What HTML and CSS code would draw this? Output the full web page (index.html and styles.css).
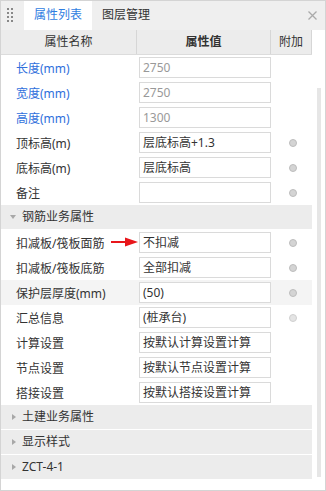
FILE: index.html
```html
<!DOCTYPE html>
<html lang="zh-CN">
<head>
  <meta charset="UTF-8">
  <title>属性列表</title>
  <link rel="stylesheet" href="styles.css">
</head>
<body>
<div class="panel">
  <div class="tabs">
    <svg class="grip" width="8" height="16" viewBox="0 0 8 16">
      <rect x="0" y="0" width="2" height="2"/><rect x="4" y="0" width="2" height="2"/>
      <rect x="0" y="4" width="2" height="2"/><rect x="4" y="4" width="2" height="2"/>
      <rect x="0" y="8" width="2" height="2"/><rect x="4" y="8" width="2" height="2"/>
      <rect x="0" y="12" width="2" height="2"/><rect x="4" y="12" width="2" height="2"/>
    </svg>
    <div class="tab active">属性列表</div>
    <div class="tab">图层管理</div>
    <svg class="close" width="9" height="9" viewBox="0 0 9 9"><path d="M0.5 0.5L8.5 8.5M8.5 0.5L0.5 8.5"/></svg>
  </div>
  <div class="body">
    <div class="table">
      <div class="head">
        <div>属性名称</div>
        <div class="bold">属性值</div>
        <div>附加</div>
      </div>

      <div class="row"><div class="label blue">长度(mm)</div><div class="val"><span class="box gray">2750</span></div><div class="add"></div></div>
      <div class="row"><div class="label blue">宽度(mm)</div><div class="val"><span class="box gray">2750</span></div><div class="add"></div></div>
      <div class="row"><div class="label blue">高度(mm)</div><div class="val"><span class="box gray">1300</span></div><div class="add"></div></div>
      <div class="row"><div class="label">顶标高(m)</div><div class="val"><span class="box">层底标高+1.3</span></div><div class="add"><i class="dot"></i></div></div>
      <div class="row"><div class="label">底标高(m)</div><div class="val"><span class="box">层底标高</span></div><div class="add"><i class="dot"></i></div></div>
      <div class="row"><div class="label">备注</div><div class="val"><span class="box"></span></div><div class="add"><i class="dot"></i></div></div>

      <div class="group open"><i class="tri"></i>钢筋业务属性</div>

      <div class="row arrow-row">
        <div class="label">扣减板/筏板面筋</div>
        <div class="val"><span class="box">不扣减</span></div>
        <div class="add"><i class="dot"></i></div>
        <svg class="arrow" width="28" height="10" viewBox="0 0 28 10"><path d="M0 4h16v2H0z"/><path d="M14 0.5L27 5L14 9.5z"/></svg>
      </div>
      <div class="row"><div class="label">扣减板/筏板底筋</div><div class="val"><span class="box">全部扣减</span></div><div class="add"><i class="dot"></i></div></div>
      <div class="row hover"><div class="label">保护层厚度(mm)</div><div class="val"><span class="box">(50)</span></div><div class="add"><i class="dot"></i></div></div>
      <div class="row"><div class="label">汇总信息</div><div class="val"><span class="box">(桩承台)</span></div><div class="add"><i class="dot light"></i></div></div>
      <div class="row"><div class="label">计算设置</div><div class="val"><span class="box">按默认计算设置计算</span></div><div class="add"></div></div>
      <div class="row"><div class="label">节点设置</div><div class="val"><span class="box">按默认节点设置计算</span></div><div class="add"></div></div>
      <div class="row"><div class="label">搭接设置</div><div class="val"><span class="box">按默认搭接设置计算</span></div><div class="add"></div></div>

      <div class="group"><i class="tri"></i>土建业务属性</div>
      <div class="group"><i class="tri"></i>显示样式</div>
      <div class="group"><i class="tri"></i>ZCT-4-1</div>
    </div>
    <div class="scroll"><div class="thumb"></div></div>
  </div>
</div>
</body>
</html>
```

FILE: styles.css
```css
*{margin: 0;padding: 0;box-sizing: border-box;}
body{
  background: #fff;
  font-family: "Noto Sans", "Noto Sans CJK SC", sans-serif;
  font-size: 12px;
  color: #333;
}
.panel{
  width: 326px;
  height: 491px;
  border: 1px solid #d4d4d4;
  display: flex;
  flex-direction: column;
}

/* 标签栏 */
.tabs{
  height: 29px;
  background: #efefef;
  display: flex;
  align-items: stretch;
}
.grip{
  fill: #888;
  margin: 7px 0 0 6px;
  flex: none;
}
.tab{
  width: 68px;
  line-height: 28px;
  text-align: center;
  font-size: 12px;
}
.tab.active{
  margin-left: 9px;
  background: #fff;
  color: #2f7de1;
}
.close{
  margin: 10px 8px 0 auto;
  stroke: #aaa;
  stroke-width: 1.3;
}

/* 主体 */
.body{
  flex: 1;
  display: flex;
}
.table{
  width: 311px;
}
.scroll{
  flex: 1;
  padding: 58px 0 0 5px;
}
.thumb{
  width: 4px;
  height: 389px;
  background: #e6e6e6;
}

/* 表头 */
.head{
  display: grid;
  grid-template-columns: 136px 134px 41px;
  height: 25px;
  background: #ececec;
  border-bottom: 1px solid #dcdcdc;
}
.head div{
  text-align: center;
  line-height: 24px;
  border-right: 1px solid #d6d6d6;
}
.head .bold{
  font-weight: bold;
}

/* 属性行 */
.row{
  display: grid;
  grid-template-columns: 137px 133px 41px;
  height: 25px;
  align-items: center;
  position: relative;
}
.row.hover{
  background: #f4f4f4;
}
.label{
  padding-left: 15px;
}
.blue{
  color: #2f6fdc;
}
.box{
  display: block;
  height: 21px;
  margin-left: 1px;
  border: 1px solid #dadada;
  background: #fff;
  line-height: 19px;
  padding-left: 3px;
  white-space: nowrap;
  overflow: hidden;
}
.gray{
  color: #999;
}
.add{
  display: flex;
  justify-content: center;
}
.dot{
  width: 8px;
  height: 8px;
  border-radius: 50%;
  background: #d4d4d4;
  border: 1px solid #bdbdbd;
  margin-left: 2px;
}
.dot.light{
  background: #e4e4e4;
  border-color: #d0d0d0;
}
.arrow{
  position: absolute;
  left: 110px;
  top: 7px;
  fill: #e8161b;
}

/* 分组行 */
.group{
  height: 24px;
  margin-bottom: 1px;
  background: #ececec;
  line-height: 24px;
  padding-left: 21px;
  position: relative;
}
.tri{
  position: absolute;
  left: 11px;
  top: 9px;
  border-top: 3px solid transparent;
  border-bottom: 3px solid transparent;
  border-left: 4px solid #a8a8a8;
}
.group.open .tri{
  left: 9px;
  top: 10px;
  border-left: 3px solid transparent;
  border-right: 3px solid transparent;
  border-top: 4px solid #a8a8a8;
  border-bottom: 0;
}
```
